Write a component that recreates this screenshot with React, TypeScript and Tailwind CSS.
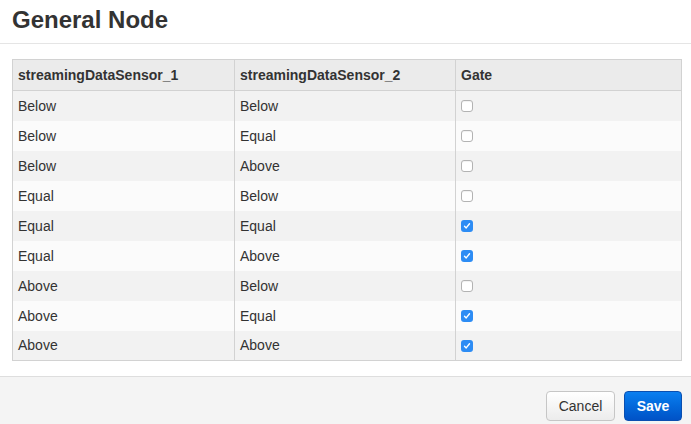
import React from "react";

const rows: [string, string, boolean][] = [
  ["Below", "Below", false],
  ["Below", "Equal", false],
  ["Below", "Above", false],
  ["Equal", "Below", false],
  ["Equal", "Equal", true],
  ["Equal", "Above", true],
  ["Above", "Below", false],
  ["Above", "Equal", true],
  ["Above", "Above", true],
];

function Box({ checked }: { checked: boolean }) {
  if (checked) {
    return (
      <span className="inline-flex h-[12px] w-[12px] items-center justify-center rounded-[3px] bg-[#2d8cf4] align-middle">
        <svg width="8" height="8" viewBox="0 0 8 8">
          <path d="M1.5 4.2 L3.2 5.9 L6.5 1.8" fill="none" stroke="#fff" strokeWidth="1.4" strokeLinecap="round" strokeLinejoin="round" />
        </svg>
      </span>
    );
  }
  return (
    <span className="inline-block h-[12px] w-[12px] rounded-[3px] border border-[#b3b3b3] bg-white align-middle shadow-[inset_0_1px_1px_rgba(0,0,0,0.06)]" />
  );
}

export default function App() {
  return (
    <div
      className="relative h-[424px] w-[691px] overflow-hidden bg-white text-[14px] text-[#333]"
      style={{ fontFamily: '"Liberation Sans", Arial, sans-serif' }}
    >
      <div className="h-[44px] border-b border-[#e5e5e5] pl-3 pt-[7px]">
        <h1 className="text-[24px] font-bold leading-[26px] text-[#333]">General Node</h1>
      </div>
      <div className="pl-3 pr-[9px] pt-[15px]">
        <table className="w-full table-fixed border-collapse border border-[#d2d2d2]">
          <colgroup>
            <col className="w-[222px]" />
            <col className="w-[221px]" />
            <col />
          </colgroup>
          <thead>
            <tr className="bg-[#ebebeb]">
              <th className="h-[31px] border-b border-r border-[#d2d2d2] px-[5px] text-left font-bold leading-[20px]">streamingDataSensor_1</th>
              <th className="h-[31px] border-b border-r border-[#d2d2d2] px-[5px] text-left font-bold leading-[20px]">streamingDataSensor_2</th>
              <th className="h-[31px] border-b border-[#d2d2d2] px-[5px] text-left font-bold leading-[20px]">Gate</th>
            </tr>
          </thead>
          <tbody>
            {rows.map((r, i) => (
              <tr key={i} className={i % 2 === 0 ? "bg-[#f2f2f2]" : "bg-[#fbfbfb]"}>
                <td className="h-[30px] border-r border-[#d2d2d2] px-[5px] leading-[20px]">{r[0]}</td>
                <td className="h-[30px] border-r border-[#d2d2d2] px-[5px] leading-[20px]">{r[1]}</td>
                <td className="h-[30px] px-[5px] leading-[20px]">
                  <span className="relative -top-[1px]">
                    <Box checked={r[2]} />
                  </span>
                </td>
              </tr>
            ))}
          </tbody>
        </table>
      </div>
      <div className="absolute left-0 right-0 top-[376px] h-[60px] border-t border-[#dedede] bg-[#f4f4f4]">
        <div className="flex justify-end gap-[9px] pr-[9px] pt-[14px]">
          <button className="h-[30px] w-[69px] rounded-[4px] border border-[#c6c6c6] bg-gradient-to-b from-white to-[#ececec] text-[14px] text-[#333]">
            Cancel
          </button>
          <button className="h-[30px] w-[58px] rounded-[4px] border border-[#0a4fb0] bg-gradient-to-b from-[#0b7ff0] to-[#0152c6] text-[14px] font-bold text-white">
            Save
          </button>
        </div>
      </div>
    </div>
  );
}
